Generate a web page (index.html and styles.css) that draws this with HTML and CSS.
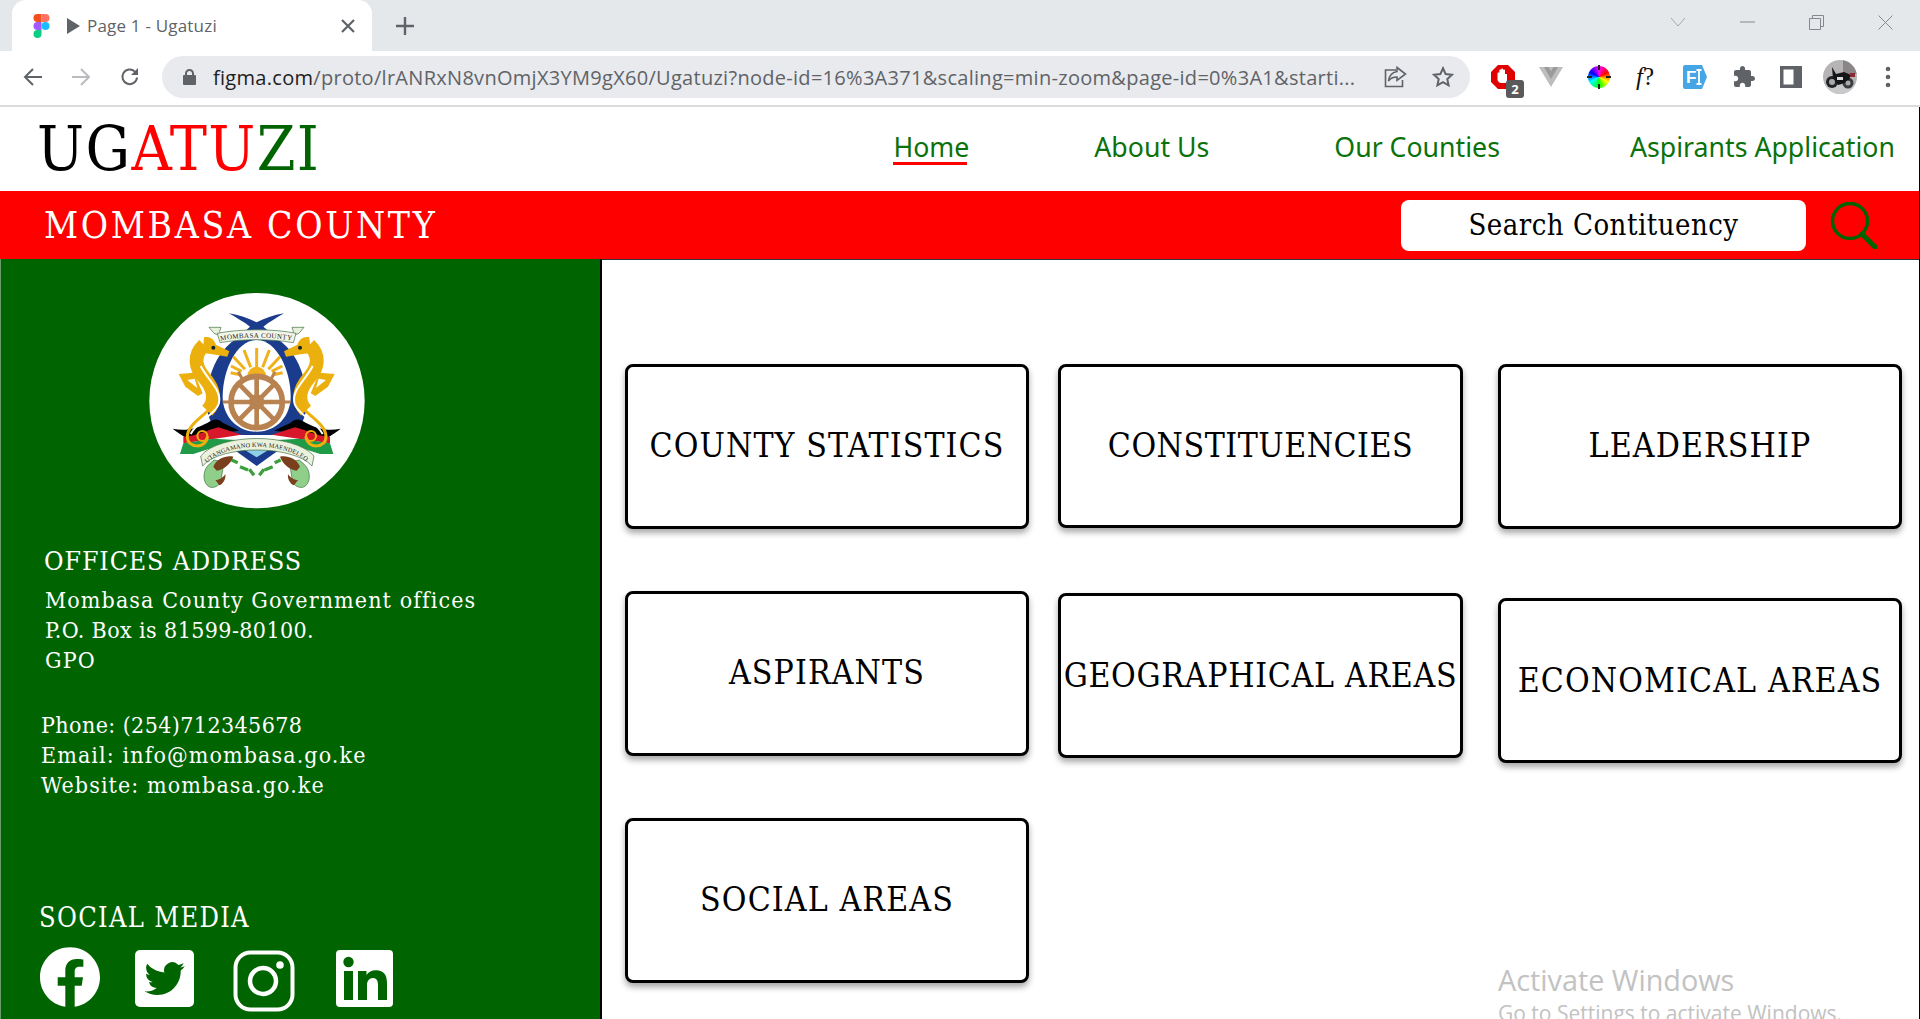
FILE: index.html
```html
<!DOCTYPE html>
<html lang="en">
<head>
<meta charset="utf-8">
<title>Page 1 - Ugatuzi</title>
<link rel="stylesheet" href="styles.css">
</head>
<body>
<div class="tabstrip">
  <div class="tab">
    <svg class="favicon" viewBox="0 0 16 24" width="17" height="24">
      <path fill="#f24e1e" d="M0 4a4 4 0 0 1 4-4h4v8H4a4 4 0 0 1-4-4z"/>
      <path fill="#ff7262" d="M8 0h4a4 4 0 0 1 0 8H8z"/>
      <path fill="#a259ff" d="M0 12a4 4 0 0 1 4-4h4v8H4a4 4 0 0 1-4-4z"/>
      <circle fill="#1abcfe" cx="12" cy="12" r="4"/>
      <path fill="#0acf83" d="M0 20a4 4 0 0 1 4-4h4v4a4 4 0 0 1-8 0z"/>
    </svg>
    <svg class="play" viewBox="0 0 13 16" width="13" height="16"><path fill="#5f6368" d="M0 0l13 8-13 8z"/></svg>
    <span class="tab-title">Page 1 - Ugatuzi</span>
    <svg class="tab-close" viewBox="0 0 14 14" width="14" height="14"><path d="M1 1l12 12M13 1L1 13" stroke="#5f6368" stroke-width="2.2" fill="none"/></svg>
  </div>
  <svg class="newtab" viewBox="0 0 18 18" width="18" height="18"><path d="M9 0v18M0 9h18" stroke="#5f6368" stroke-width="2.4" fill="none"/></svg>
  <div class="winctrls">
    <svg viewBox="0 0 16 10" width="16" height="10"><path d="M1 1l7 8 7-8" stroke="#a4a7ab" fill="none"/></svg>
    <svg viewBox="0 0 15 2" width="15" height="2"><path d="M0 1h15" stroke="#85888c" fill="none"/></svg>
    <svg viewBox="0 0 15 15" width="15" height="15"><path d="M.5 3.500h11v11H.5zM3.500 3.500v-3h11v11h-3" stroke="#85888c" fill="none"/></svg>
    <svg viewBox="0 0 15 15" width="15" height="15"><path d="M.5.5l14 14M14.500.5l-14 14" stroke="#85888c" fill="none"/></svg>
  </div>
</div>
<div class="toolbar">
  <svg class="nav-btn nav-back" viewBox="0 0 20 20" width="20" height="20"><path d="M19 10H2M10 2l-8 8 8 8" stroke="#5f6368" stroke-width="2" fill="none"/></svg>
  <svg class="nav-btn nav-fwd" viewBox="0 0 20 20" width="20" height="20"><path d="M1 10h17M10 2l8 8-8 8" stroke="#b9bbbe" stroke-width="2" fill="none"/></svg>
  <svg class="nav-btn nav-reload" viewBox="0 0 20 20" width="20" height="20"><path d="M17 10.500A7.300 7.300 0 1 1 14.800 4.600" stroke="#5f6368" stroke-width="2" fill="none"/><path d="M18 1v7h-7z" fill="#5f6368"/></svg>
  <div class="omnibox">
    <svg class="lock" viewBox="0 0 13 16" width="13" height="16"><path fill="#5f6368" d="M2 6V4.500a4.500 4.500 0 0 1 9 0V6h1a1 1 0 0 1 1 1v8a1 1 0 0 1-1 1H1a1 1 0 0 1-1-1V7a1 1 0 0 1 1-1zm2 0h5V4.500a2.500 2.500 0 0 0-5 0z"/></svg>
    <span class="url"><span class="url-host">figma.com</span>/proto/lrANRxN8vnOmjX3YM9gX60/Ugatuzi?node-id=16%3A371&amp;scaling=min-zoom&amp;page-id=0%3A1&amp;starti...</span>
    <svg class="share" viewBox="0 0 23 22" width="23" height="22"><path d="M12 4H1.500v16.500h17V14" stroke="#5f6368" stroke-width="1.600" fill="none"/><path d="M13 1.500l8.500 6.500-8.500 6.500v-3.500c-4 0-6.500 1-8.500 4 .5-5 3.500-8.500 8.500-9.500z" stroke="#5f6368" stroke-width="1.600" fill="none"/></svg>
    <svg class="star" viewBox="0 0 24 24" width="22" height="22"><path d="M12 2.500l2.900 6.300 6.900.8-5.100 4.700 1.400 6.800L12 17.700l-6.100 3.400 1.400-6.800-5.100-4.700 6.900-.8z" stroke="#5f6368" stroke-width="2.200" fill="none"/></svg>
  </div>
  <div class="exts">
    <div class="ext ext-adblock">
      <svg viewBox="0 0 24 24" width="24" height="24"><path fill="#e00000" d="M7 0h10l7 7v10l-7 7H7l-7-7V7z"/><path fill="#fff" d="M6.500 15V8.500c0-1.300 1.800-1.300 1.800 0V5.500c0-1.300 1.900-1.300 1.900 0V4.500c0-1.300 1.900-1.300 1.900 0V5.500c0-1.300 1.900-1.300 1.900 0V9l2 0v9H10c-2 0-2.700-1.500-3.500-3z"/></svg>
      <span class="ext-badge">2</span>
    </div>
    <svg class="ext ext-vue" viewBox="0 0 24 20" width="24" height="20"><path fill="#bdbdbd" d="M0 0h24L12 20z"/><path fill="#9a9a9a" d="M5 0h4.500L12 4.200 14.500 0H19l-7 12z"/></svg>
    <div class="ext ext-wheel"><span class="wheel"></span></div>
    <span class="ext ext-f"><i class="f-letter">f</i>?</span>
    <svg class="ext ext-file" viewBox="0 0 24 24" width="24" height="24"><path fill="#45a5e5" d="M2 0h17l5 12-5 12H2a2 2 0 0 1-2-2V2a2 2 0 0 1 2-2z"/><text x="3" y="18" class="ext-fi">F</text><path d="M13.500 5h5M16 5v14M13.500 19h5" stroke="#fff" stroke-width="1.800" fill="none"/></svg>
    <svg class="ext ext-puzzle" viewBox="0 0 24 24" width="24" height="24"><path fill="#5f6368" d="M20.500 11H19V7c0-1.100-.9-2-2-2h-4V3.500C13 2.120 11.880 1 10.500 1S8 2.120 8 3.500V5H4c-1.100 0-1.990.9-1.990 2v3.800H3.500c1.490 0 2.700 1.210 2.700 2.700s-1.210 2.700-2.700 2.700H2V20c0 1.100.9 2 2 2h3.800v-1.500c0-1.490 1.210-2.700 2.700-2.700 1.490 0 2.700 1.210 2.700 2.700V22H17c1.100 0 2-.9 2-2v-4h1.500c1.380 0 2.500-1.120 2.500-2.500S21.880 11 20.500 11z"/></svg>
    <svg class="ext ext-panel" viewBox="0 0 22 22" width="22" height="22"><path fill="#5f6368" d="M0 0h22v22H0z"/><path fill="#fff" d="M3.500 3.500h10v15h-10z"/></svg>
    <svg class="ext avatar" viewBox="0 0 34 34" width="34" height="34"><defs><clipPath id="av"><circle cx="17" cy="17" r="17"/></clipPath></defs><g clip-path="url(#av)"><path fill="#b7b4b6" d="M0 0h34v34H0z"/><path fill="#8a8688" d="M20 0h14v14H20z"/><path fill="#c9c9cc" d="M0 25h34v9H0z"/><circle cx="9" cy="22" r="6" fill="#222426"/><circle cx="25" cy="23" r="5.500" fill="#3a3c3e"/><path fill="#141517" d="M9 7l4 7 8-2 7 3-3 7-10 3-5-6z"/><circle cx="9" cy="22" r="3" fill="#a9a9ac"/><circle cx="25" cy="23" r="2.500" fill="#a9a9ac"/><path fill="#8c2a33" d="M27 13h5v4h-5z"/><path fill="#dcdcdc" d="M14 17h6v3h-6z"/></g></svg>
    <svg class="ext ext-dots" viewBox="0 0 6 22" width="6" height="22"><circle cx="3" cy="3" r="2.300" fill="#5f6368"/><circle cx="3" cy="11" r="2.300" fill="#5f6368"/><circle cx="3" cy="19" r="2.300" fill="#5f6368"/></svg>
  </div>
</div>

<div class="page">
  <header class="topbar">
    <div class="logo"><span class="logo-black">UG</span><span class="logo-red">ATU</span><span class="logo-green">ZI</span></div>
    <nav class="mainnav">
      <a class="navlink navlink-active">Home</a>
      <a class="navlink">About Us</a>
      <a class="navlink">Our Counties</a>
      <a class="navlink navlink-last">Aspirants Application</a>
    </nav>
  </header>
  <div class="countybar">
    <h1 class="county-name">MOMBASA COUNTY</h1>
    <div class="search-box">Search Contituency</div>
    <svg class="search-icon" viewBox="0 0 47 47" width="47" height="47"><circle cx="20" cy="19" r="17.500" stroke="#006400" stroke-width="3.500" fill="none"/><path d="M32 32l13 13" stroke="#006400" stroke-width="5" stroke-linecap="round"/></svg>
  </div>
  <div class="main">
    <aside class="sidebar">
      <svg class="emblem" viewBox="0 0 780 720" width="260" height="240">
        <defs>
          <path id="motto-arc" d="M226 556C285 482 480 482 540 556"/>
          <path id="title-arc" d="M272 182C340 170 420 170 490 182"/>
        </defs>
        <circle cx="381" cy="362" r="323" fill="#fff"/>
        <path fill="#1b3c8c" d="M297 100c30 5 60 15 83 27 23-12 50-22 82-27-25 15-45 27-62 40l22 18H340l20-18c-17-13-38-25-63-40z"/>
        <path fill="#1b3c8c" d="M380 160c90 0 150 100 150 205 0 50-20 80-45 100H275c-25-20-45-50-45-100 0-105 60-205 150-205z"/>
        <path fill="#fff" d="M380 180c60 0 102 90 102 170 0 55-40 105-102 105s-102-50-102-105c0-80 42-170 102-170z"/>
        <path stroke="#f0b11c" stroke-width="9" fill="none" d="M380 262v-58M362 262l-20-52M398 262l20-52M345 268l-35-38M415 268l35-38M335 274l-32-16M425 274l32-16M330 284l-28-6M430 284l28-6"/>
        <path fill="#f0b11c" d="M352 288a28 28 0 0 1 56 0z"/>
        <circle cx="380" cy="366" r="77" fill="none" stroke="#b98251" stroke-width="17"/>
        <path stroke="#b98251" stroke-width="14" fill="none" d="M380 290v150M305 366h150M325 310l110 112M435 310L325 422"/>
        <path stroke="#b98251" stroke-width="9" fill="none" d="M278 366h24M458 366h24M325 275l15 28M435 275l-15 28"/>
        <circle cx="380" cy="366" r="23" fill="#b98251"/>
        <path fill="#000" d="M128 446c40 8 70 0 105-18 15-10 30-15 45 0l50 24-100 12-60 10c-10-8-28-18-40-28zM632 446c-40 8-70 0-105-18-15-10-30-15-45 0l-50 24 100 12 60 10c10-8 28-18 40-28z"/>
        <path fill="#d8182a" d="M160 470c40 0 70-20 105-28l70 22-90 14-85 12zM600 470c-40 0-70-20-105-28l-70 22 90 14 85 12z"/>
        <path fill="#1f9a46" d="M150 522l10-32 90-14 70 4-130 42zM610 522l-10-32-90-14-70 4 130 42z"/>
        <path fill="#1b3c8c" d="M305 504h150l-75 54z"/>
        <path fill="#8ed0e8" d="M345 510h70l-35 22z"/>
        <path stroke="#3ba03c" stroke-width="10" d="M305 540l18 8M330 560l24 10M358 568l14 18M402 568l-14 18M428 560l-24 10M452 540l-18 8"/>
        <path fill="#eaf1dc" stroke="#3d6d3d" stroke-width="2" d="M212 528C270 458 490 458 552 528L546 558C490 494 270 494 218 558z"/>
        <text class="emblem-motto"><textPath href="#motto-arc" startOffset="8" textLength="318">UTANGAMANO KWA MAENDELEO</textPath></text>
        <path fill="#8fcf8a" stroke="#3d6d3d" stroke-width="2" d="M222 590c0-30 20-40 30-50l30 6-10 60c-5 12-20 18-30 16-12-3-20-18-20-32zM538 590c0-30-20-40-30-50l-30 6 10 60c5 12 20 18 30 16 12-3 20-18 20-32z"/>
        <path fill="#7a3f1c" d="M250 560c10-25 40-35 60-30-8 22-30 40-50 42zM510 560c-10-25-40-35-60-30 8 22 30 40 50 42zM256 600c12 0 25-8 30-18 2 15-6 30-18 34zM504 600c-12 0-25-8-30-18-2 15 6 30 18 34z"/>
        <path fill="#ecb00e" d="M146 282l46-4 26 62-14 8-38-28z"/>
        <path fill="#fff" d="M172 300l22-4 8 28z"/>
        <path fill="none" stroke="#ecb00e" stroke-width="42" d="M222 195C190 225 195 262 222 292C255 330 258 365 232 392"/>
        <path fill="none" stroke="#ecb00e" stroke-width="9" stroke-linecap="round" d="M236 390C205 420 172 440 172 470C172 505 226 508 232 472"/>
        <circle cx="217" cy="468" r="15" fill="none" stroke="#ecb00e" stroke-width="6"/>
        <path fill="#ecb00e" d="M222 172c18-4 30 6 36 22l40 20-6 16-44-7-30-4z"/>
        <path fill="none" stroke="#fff" stroke-width="6" d="M212 258C232 300 278 330 266 372C255 405 200 425 182 462"/>
        <path fill="#ecb00e" d="M614 282l-46-4-26 62 14 8 38-28z"/>
        <path fill="#fff" d="M588 300l-22-4-8 28z"/>
        <path fill="none" stroke="#ecb00e" stroke-width="42" d="M538 195C570 225 565 262 538 292C505 330 502 365 528 392"/>
        <path fill="none" stroke="#ecb00e" stroke-width="9" stroke-linecap="round" d="M524 390C555 420 588 440 588 470C588 505 534 508 528 472"/>
        <circle cx="543" cy="468" r="15" fill="none" stroke="#ecb00e" stroke-width="6"/>
        <path fill="#ecb00e" d="M538 172c-18-4-30 6-36 22l-40 20 6 16 44-7 30-4z"/>
        <path fill="none" stroke="#fff" stroke-width="6" d="M548 258C528 300 482 330 494 372C505 405 560 425 578 462"/>
        <circle cx="250" cy="203" r="6" fill="#123"/>
        <circle cx="510" cy="203" r="6" fill="#123"/>
        <path fill="#e8efdc" stroke="#3d6d3d" stroke-width="2" d="M237 142h36l-4 12 3 14-20-8zM522 142h-36l4 12-3 14 20-8z"/>
        <path fill="#f2f6ea" stroke="#3d6d3d" stroke-width="2" d="M262 160c70-14 170-14 236 0l-8 28c-70-12-150-12-220 0z"/>
        <text class="emblem-title"><textPath href="#title-arc" textLength="214">MOMBASA COUNTY</textPath></text>
      </svg>
      <h2 class="side-title office-title">OFFICES ADDRESS</h2>
      <p class="side-text address">Mombasa County Government offices<br><span class="num">P.O. Box is 81599-80100.</span><br>GPO</p>
      <p class="side-text contact"><span class="num">Phone: (254)712345678</span><br>Email: info@mombasa.go.ke<br>Website: mombasa.go.ke</p>
      <h2 class="side-title social-title">SOCIAL MEDIA</h2>
      <div class="socials">
        <svg class="soc-fb" viewBox="0 0 24 24" width="60" height="60" preserveAspectRatio="none"><path fill="#fff" d="M24 12.073c0-6.627-5.373-12-12-12s-12 5.373-12 12c0 5.990 4.388 10.954 10.125 11.854v-8.385H7.078v-3.470h3.047V9.430c0-3.007 1.792-4.669 4.533-4.669 1.312 0 2.686.235 2.686.235v2.953H15.830c-1.491 0-1.956.925-1.956 1.874v2.250h3.328l-.532 3.470h-2.796v8.385C19.612 23.027 24 18.062 24 12.073z"/></svg>
        <svg class="soc-tw" viewBox="0 0 59 57" width="59" height="57"><rect width="59" height="57" rx="5" fill="#fff"/><path fill="#006400" transform="translate(9.500 8.500) scale(1.680)" d="M23.953 4.570a10 10 0 01-2.825.775 4.958 4.958 0 002.163-2.723c-.951.555-2.005.959-3.127 1.184a4.920 4.920 0 00-8.384 4.482C7.690 8.095 4.067 6.130 1.640 3.162a4.822 4.822 0 00-.666 2.475c0 1.710.870 3.213 2.188 4.096a4.904 4.904 0 01-2.228-.616v.060a4.923 4.923 0 003.946 4.827 4.996 4.996 0 01-2.212.085 4.936 4.936 0 004.604 3.417 9.867 9.867 0 01-6.102 2.105c-.390 0-.779-.023-1.170-.067a13.995 13.995 0 007.557 2.209c9.053 0 13.998-7.496 13.998-13.985 0-.210 0-.420-.015-.630A9.935 9.935 0 0024 4.590z"/></svg>
        <svg class="soc-ig" viewBox="0 0 62 62" width="62" height="62"><rect x="2.500" y="2.500" width="57" height="57" rx="15" fill="none" stroke="#fff" stroke-width="4"/><circle cx="30" cy="31" r="13" fill="none" stroke="#fff" stroke-width="4.500"/><circle cx="47" cy="15" r="3.800" fill="#fff"/></svg>
        <svg class="soc-in" viewBox="0 0 57 57" width="57" height="57"><rect width="57" height="57" rx="4" fill="#fff"/><path fill="#006400" d="M8 21h9v29H8z"/><circle cx="12.500" cy="12" r="5.200" fill="#006400"/><path fill="#006400" d="M22 21h8.500v4c2-3 5-4.800 9.500-4.800 8 0 11 5 11 13V50h-9V35c0-4-1.300-7-5-7s-6 3-6 7v15h-9z"/></svg>
      </div>
    </aside>
    <section class="content">
      <div class="tiles">
        <a class="tile">COUNTY STATISTICS</a>
        <a class="tile tile-short">CONSTITUENCIES</a>
        <a class="tile">LEADERSHIP</a>
        <a class="tile">ASPIRANTS</a>
        <a class="tile tile-geo">GEOGRAPHICAL AREAS</a>
        <a class="tile tile-econ">ECONOMICAL AREAS</a>
        <a class="tile">SOCIAL AREAS</a>
      </div>
      <div class="watermark">
        <div class="wm-title">Activate Windows</div>
        <div class="wm-sub">Go to Settings to activate Windows.</div>
      </div>
    </section>
  </div>
</div>
</body>
</html>
```
FILE: styles.css
```css
* { box-sizing: border-box; }
html, body { margin: 0; height: 1019px; overflow: hidden; background: #fff; }
body { font-family: "Open Sans", sans-serif; display: flex; flex-direction: column; }

.tabstrip { height: 51px; flex: none; background: #e5e8eb; display: flex; align-items: flex-end; }
.tab { margin-left: 12px; width: 360px; height: 51px; background: #fff; border-radius: 14px 14px 0 0; display: flex; align-items: center; padding-left: 21px; }
.favicon { margin-right: 17px; }
.play { margin-right: 7px; }
.tab-title { font-size: 17px; letter-spacing: .2px; color: #5f6368; width: 254px; white-space: nowrap; }
.tab-close { flex: none; }
.newtab { margin-left: 24px; align-self: center; }
.winctrls { margin-left: auto; align-self: flex-start; display: flex; align-items: center; gap: 54px; height: 44px; padding-right: 27px; }

.toolbar { height: 56px; flex: none; background: #fff; border-bottom: 2px solid #dcdcdc; display: flex; align-items: center; padding-bottom: 2px; }
.nav-btn { flex: none; }
.nav-back { margin-left: 23px; }
.nav-fwd { margin-left: 28px; }
.nav-reload { margin-left: 29px; }
.omnibox { margin-left: 22px; width: 1308px; height: 42px; border-radius: 21px; background: #e8eaed; display: flex; align-items: center; padding-left: 21px; }
.lock { flex: none; margin-right: 17px; }
.url { font-size: 20px; color: #5f6368; width: 1171px; white-space: nowrap; letter-spacing: .29px; }
.url-host { color: #202124; }
.share { flex: none; }
.star { flex: none; margin-left: 25px; }
.exts { display: flex; align-items: center; margin-left: 21px; }
.ext { flex: none; }
.ext-adblock { width: 24px; height: 24px; position: relative; margin-right: 24px; }
.ext-badge { position: absolute; left: 15px; top: 15px; width: 18px; height: 18px; background: #5a5a5a; color: #fff; font: 700 13px/18px "Open Sans", sans-serif; text-align: center; border-radius: 3px; }
.ext-vue { margin-right: 25px; }
.ext-wheel { width: 22px; height: 22px; margin-right: 26px; display: flex; }
.wheel { width: 22px; height: 22px; border-radius: 50%; background: conic-gradient(#f0f, #f00, #ff0, #0f0, #0ff, #00f, #f0f); position: relative; }
.wheel::before { content: ""; position: absolute; left: -1px; right: -1px; top: 10px; height: 2px; background: linear-gradient(90deg, #222 0 5px, transparent 5px 19px, #222 19px); }
.wheel::after { content: ""; position: absolute; top: -1px; bottom: -1px; left: 10px; width: 2px; background: linear-gradient(180deg, #222 0 5px, transparent 5px 19px, #222 19px); }
.ext-f { width: 23px; margin-right: 24px; font: 400 25px/24px "Liberation Serif", serif; color: #111; white-space: nowrap; }
.f-letter { font-style: italic; }
.ext-file { margin-right: 25px; }
.ext-fi { font: 700 17px "Liberation Sans", sans-serif; fill: #fff; }
.ext-puzzle { margin-right: 24px; }
.ext-panel { margin-right: 21px; }
.avatar { margin-right: 28px; }

.page { flex: 1; min-height: 0; display: flex; flex-direction: column; border-right: 1px solid #000; }
.topbar { height: 84px; flex: none; display: flex; align-items: center; padding-left: 37px; padding-right: 24px; background: #fff; }
.logo { font-family: "DejaVu Serif Condensed", "DejaVu Serif", serif; font-size: 62px; letter-spacing: 1.4px; line-height: 1; white-space: nowrap; }
.logo-black { color: #000; }
.logo-red { color: #f00; }
.logo-green { color: #006400; }
.mainnav { margin-left: auto; margin-bottom: 5px; display: flex; gap: 125px; }
.navlink { font-family: "Noto Sans", sans-serif; font-size: 26.700px; line-height: 38px; color: #0b720b; white-space: nowrap; position: relative; }
.navlink-last { margin-left: 5px; }
.navlink-active::after { content: ""; position: absolute; left: 0; right: 2px; bottom: 1px; height: 3px; background: #f00; }

.countybar { height: 68px; flex: none; background: #f00; display: flex; align-items: center; padding-left: 44px; }
.county-name { margin: 0; font: 400 37px/1 "DejaVu Serif Condensed", "DejaVu Serif", serif; letter-spacing: 2.700px; color: #fff; white-space: nowrap; }
.search-box { margin: 1px 0 0 auto; width: 405px; height: 51px; border-radius: 8px; background: #fff; color: #000; display: flex; align-items: center; justify-content: center; font: 400 29px/1 "DejaVu Serif Condensed", "DejaVu Serif", serif; letter-spacing: .5px; white-space: nowrap; }
.search-icon { margin-left: 24px; margin-right: 42px; flex: none; }

.main { flex: 1; min-height: 0; display: flex; }
.sidebar { width: 600px; flex: none; background: #006400; padding-top: 21px; border-left: 1px solid #6a9a6a; overflow: hidden; }
.emblem { display: block; margin-left: 129px; }
.side-title { margin: 0; font: 400 26.500px/34px "DejaVu Serif Condensed", "DejaVu Serif", serif; letter-spacing: .9px; color: #fff; white-space: nowrap; }
.side-text { margin: 0; font: 400 23px/30px "DejaVu Serif Condensed", "DejaVu Serif", serif; letter-spacing: 1.100px; color: #fff; white-space: nowrap; }
.num { letter-spacing: .4px; }
.office-title { margin: 24px 0 0 43px; }
.address { margin: 7px 0 0 44px; }
.contact { margin: 35px 0 0 40px; }
.social-title { margin: 101px 0 0 38px; font-size: 27px; letter-spacing: 1.300px; }
.socials { display: flex; align-items: flex-start; margin: 12px 0 0 39px; }
.soc-tw { margin: 3px 0 0 35px; }
.soc-ig { margin: 3px 0 0 39px; }
.soc-in { margin: 3px 0 0 41px; }

.content { flex: 1; min-width: 0; background: #fff; border-left: 2px solid #000; border-top: 1px solid #333; position: relative; padding: 104px 0 0 23px; overflow: hidden; }
.tiles { display: grid; grid-template-columns: 404px 405px 404px; column-gap: 29px; row-gap: 62px; grid-auto-rows: 165px; }
.tiles .tile:nth-child(3n) { margin-left: 6px; }
.tile { width: 404px; height: 165px; border: 3px solid #000; border-radius: 8px; background: #fff; box-shadow: 0 4px 6px rgba(0,0,0,.35); color: #000; display: flex; align-items: center; justify-content: center; font: 400 33.500px/1 "DejaVu Serif Condensed", "DejaVu Serif", serif; letter-spacing: 1.100px; white-space: nowrap; padding-bottom: 1px; }
.tile-short { height: 164px; width: 405px; letter-spacing: .5px; }
.tile-geo { margin-top: 2px; width: 405px; letter-spacing: .7px; padding: 1px 0 0; }
.tile-econ { margin-top: 7px; padding: 1px 0 0; }

.watermark { position: absolute; left: 896px; top: 701px; color: #c2c2c2; white-space: nowrap; font-family: "Open Sans", sans-serif; }
.wm-title { font-size: 28.800px; line-height: 38px; }
.wm-sub { font-size: 21px; line-height: 28px; }

.emblem-title { font: 400 21px "Liberation Serif", serif; fill: #222; }
.emblem-motto { font: 400 19px "Liberation Serif", serif; fill: #222; }
```
